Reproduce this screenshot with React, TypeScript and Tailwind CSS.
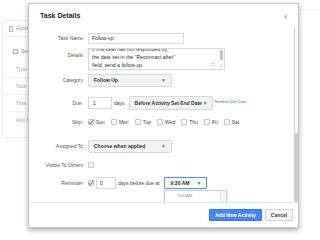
import React from "react";

function Caret() {
  return <span className="text-[5px] leading-none text-[#777]">▼</span>;
}

function Check({ checked }: { checked?: boolean }) {
  return (
    <div className="w-[6px] h-[6px] border border-[#c6c6c6] bg-white rounded-[1px] flex items-center justify-center shrink-0">
      {checked && (
        <svg width="6" height="6" viewBox="0 0 6 6" className="overflow-visible">
          <path d="M0.6 3.2 L2.2 4.8 L5.6 0.6" fill="none" stroke="#333" strokeWidth="0.8" />
        </svg>
      )}
    </div>
  );
}

function Row({ label, children, className = "", labelClass = "" }: { label: string; children: React.ReactNode; className?: string; labelClass?: string }) {
  return (
    <div className={"flex " + className}>
      <div className={"w-[54px] text-right text-[5px] leading-none text-[#555] shrink-0 " + labelClass}>{label}</div>
      <div className="ml-[5px] flex items-center">{children}</div>
    </div>
  );
}

export default function App() {
  const days = ["Sun", "Mon", "Tue", "Wed", "Thu", "Fri", "Sat"];
  return (
    <div className="relative w-[320px] h-[240px] overflow-hidden bg-white font-['Liberation_Sans',Arial,sans-serif]">
      {/* background page */}
      <div className="flex flex-col pt-[9px]">
        <div className="h-px bg-[#f0f0f0] ml-[300px]" />
        <div className="ml-[2px] mt-[10px] w-[80px] h-[118px] border border-[#ececec] rounded-[2px] flex flex-col text-[5px] leading-none text-[#aaa]">
          <div className="h-[16px] flex items-center pl-[6px] gap-[3px] border-b border-[#ececec]">
            <div className="w-[4px] h-[6px] border border-[#bbb]" />
            <span className="text-[#999]">Activities</span>
          </div>
          <div className="h-[20px] flex items-center pl-[10px] gap-[3px] mt-[4px]">
            <div className="w-[5px] h-[5px] border border-[#9bc48f]" />
            <span className="text-[#6b8fd6]">Select</span>
          </div>
          <div className="h-[17px] flex items-center pl-[13px] border-b border-[#f0f0f0]">Type</div>
          <div className="h-[17px] flex items-center pl-[13px] border-b border-[#f0f0f0]">Task</div>
          <div className="h-[17px] flex items-center pl-[13px] border-b border-[#f0f0f0]">Task</div>
          <div className="h-[17px] flex items-center pl-[13px]">Add New</div>
        </div>
      </div>

      {/* modal */}
      <div className="absolute left-[28px] top-[3px] w-[271px] h-[225px] bg-white border border-[#c8c8c8] shadow-[0_2px_5px_rgba(0,0,0,0.35)] flex flex-col">
        {/* header */}
        <div className="h-[23px] flex items-center justify-between pl-[11px] pr-[10px] shrink-0">
          <span className="text-[7px] font-bold text-[#222] leading-none">Task Details</span>
          <span className="text-[6px] text-[#999] leading-none mt-[3px]">✕</span>
        </div>
        {/* body */}
        <div className="flex-1 flex overflow-hidden">
          <div className="flex-1 flex flex-col overflow-hidden">
            <Row label="Task Name" className="mt-[6px] items-center">
              <div className="w-[96px] h-[11px] border border-[#d9d9d9] bg-white flex items-center pl-[3px] text-[5px] text-[#333] leading-none">Follow-up</div>
            </Row>
            <Row label="Details" className="mt-[4px] items-start" labelClass="mt-[5px]">
              <div className="relative w-[137px] h-[22px] border border-[#d9d9d9] bg-white overflow-hidden flex">
                <div className="flex-1 -mt-[4px] pl-[3px] text-[5.2px] leading-[8px] text-[#333] whitespace-nowrap">
                  <div>If this deal has not responded by</div>
                  <div>the date set in the "Reconnact after"</div>
                  <div>field, send a follow-up.</div>
                </div>
                <div className="w-[5px] flex flex-col items-center pt-[1px]">
                  <div className="w-[3px] h-[10px] bg-[#c4c4c4] rounded-[1px]" />
                </div>
                <svg className="absolute right-[1px] bottom-[1px]" width="5" height="5" viewBox="0 0 5 5">
                  <path d="M4.5 1 L1 4.5 M4.5 3 L3 4.5" stroke="#aaa" strokeWidth="0.6" />
                </svg>
                <svg className="absolute right-[8px] bottom-[2px]" width="6" height="5" viewBox="0 0 6 5">
                  <path d="M0.5 1.5 H4.5 L3.5 0.5 M5.5 3.5 H1.5 L2.5 4.5" fill="none" stroke="#bbb" strokeWidth="0.6" />
                </svg>
              </div>
            </Row>
            <Row label="Category" className="mt-[4px] items-center">
              <div className="w-[84px] h-[13px] border border-[#d8d8d8] bg-[#f3f3f3] rounded-[2px] flex items-center justify-between pl-[5px] pr-[5px]">
                <span className="text-[5px] font-bold text-[#333] leading-none">Follow Up</span>
                <Caret />
              </div>
            </Row>
            <Row label="Due:" className="mt-[9px] items-center">
              <div className="w-[24px] h-[12px] border border-[#d9d9d9] bg-white flex items-center pl-[4px] text-[5px] text-[#333] leading-none">1</div>
              <span className="ml-[2px] text-[5px] text-[#444] leading-none">days</span>
              <div className="ml-[4px] w-[84px] h-[14px] border border-[#d8d8d8] bg-[#f3f3f3] rounded-[2px] flex items-center justify-between pl-[5px] pr-[4px]">
                <span className="text-[5px] font-bold text-[#333] leading-none whitespace-nowrap">Before Activity Set End Date</span>
                <Caret />
              </div>
              <span className="ml-[2px] text-[3.8px] text-[#3a66c9] leading-none whitespace-nowrap">Remove Due Date</span>
            </Row>
            <Row label="Skip:" className="mt-[8px] items-center h-[8px]">
              <div className="flex items-center gap-[6px]">
                {days.map((d, i) => (
                  <div key={d} className="flex items-center gap-[2px]">
                    <Check checked={i === 0} />
                    <span className="text-[5px] text-[#444] leading-none">{d}</span>
                  </div>
                ))}
              </div>
            </Row>
            <Row label="Assigned To" className="mt-[14px] items-center">
              <div className="w-[84px] h-[13px] border border-[#d8d8d8] bg-[#f3f3f3] rounded-[2px] flex items-center justify-between pl-[5px] pr-[5px]">
                <span className="text-[5px] font-bold text-[#333] leading-none">Choose when applied</span>
                <Caret />
              </div>
            </Row>
            <Row label="Visible To Others" className="mt-[8px] items-center h-[8px]">
              <Check />
            </Row>
            <Row label="Reminder" className="mt-[8px] items-center h-[12px]">
              <Check checked />
              <div className="ml-[2px] w-[20px] h-[12px] border border-[#d9d9d9] bg-white flex items-center pl-[3px] text-[5px] text-[#333] leading-none">0</div>
              <span className="ml-[2px] text-[5px] text-[#444] leading-none whitespace-nowrap">days before due at</span>
              <div className="relative ml-[5px]">
                <div className="w-[43px] h-[12px] border border-[#4d90fe] bg-[#f8f8f8] rounded-[1px] flex items-center justify-between pl-[5px] pr-[5px]">
                  <span className="text-[5px] font-bold text-[#333] leading-none">9:30 AM</span>
                  <Caret />
                </div>
                <div className="absolute left-0 top-[13px] w-[63px] h-[20px] bg-white border border-[#d0d0d0] shadow-[0_1px_2px_rgba(0,0,0,0.2)] flex">
                  <div className="flex-1 flex flex-col text-[4px] text-[#888] leading-none pl-[12px]">
                    <div className="h-[9px] flex items-center">9:00 AM</div>
                    <div className="h-[9px] flex items-center">9:30 AM</div>
                  </div>
                  <div className="w-[6px] border-l border-[#e6e6e6] bg-[#f7f7f7]" />
                </div>
              </div>
            </Row>
          </div>
          {/* scrollbar */}
          <div className="w-[4px] border-l border-[#cfcfcf] bg-[#fafafa] flex flex-col">
            <div className="h-[106px]" />
            <div className="flex-1 bg-[#cdcdcd]" />
          </div>
        </div>
        {/* footer */}
        <div className="h-[25px] border-t border-[#e6e6e6] flex items-center justify-end gap-[3px] pr-[5px] shrink-0 bg-white">
          <div className="w-[53px] h-[12px] bg-[#4787ed] border border-[#3079ed] rounded-[1px] flex items-center justify-center text-[5px] font-bold text-white leading-none">Add New Activity</div>
          <div className="w-[28px] h-[12px] bg-[#f5f5f5] border border-[#d3d3d3] rounded-[1px] flex items-center justify-center text-[5px] font-bold text-[#444] leading-none">Cancel</div>
        </div>
      </div>
    </div>
  );
}
